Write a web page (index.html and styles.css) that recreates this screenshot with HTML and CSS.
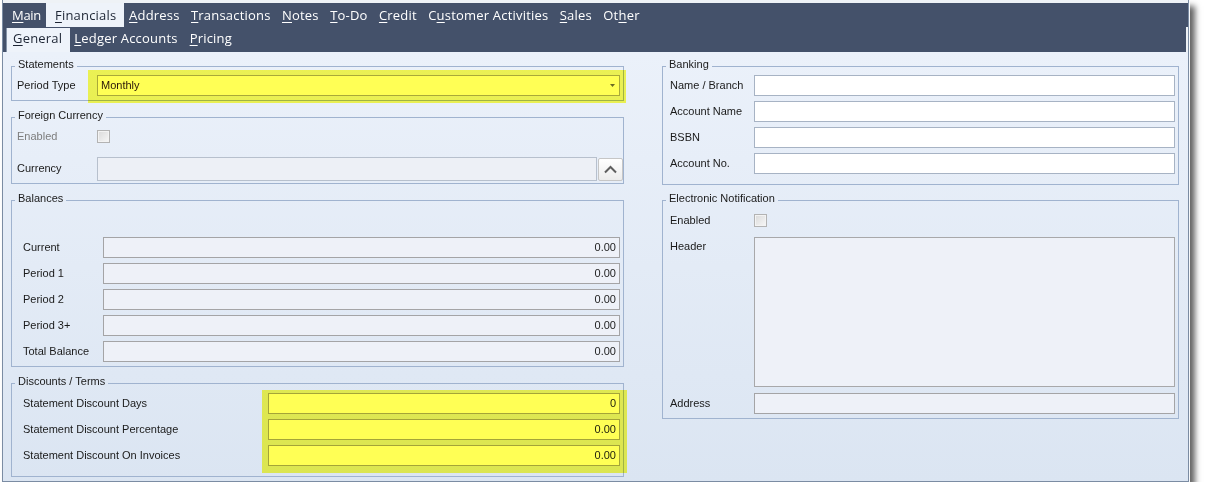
FILE: index.html
```html
<!DOCTYPE html>
<html>
<head>
<meta charset="utf-8">
<title>Financials</title>
<link rel="stylesheet" href="styles.css">
</head>
<body>
<div class="window">
  <div class="tabbar">
    <div class="tabrow top">
      <span class="tab first"><u>M</u>ain</span>
      <span class="tab sel"><u>F</u>inancials</span>
      <span class="tab"><u>A</u>ddress</span>
      <span class="tab"><u>T</u>ransactions</span>
      <span class="tab"><u>N</u>otes</span>
      <span class="tab"><u>T</u>o-Do</span>
      <span class="tab"><u>C</u>redit</span>
      <span class="tab">C<u>u</u>stomer Activities</span>
      <span class="tab"><u>S</u>ales</span>
      <span class="tab">Ot<u>h</u>er</span>
    </div>
    <div class="tabrow sub">
      <span class="tab sel"><u>G</u>eneral</span>
      <span class="tab"><u>L</u>edger Accounts</span>
      <span class="tab"><u>P</u>ricing</span>
    </div>
  </div>

  <div class="content">
    <div class="col left">
      <fieldset class="g">
        <legend>Statements</legend>
        <div class="gb gb-stmt">
          <div class="row">
            <span class="lbl w80">Period Type</span>
            <div class="select w523"><span>Monthly</span><svg class="caret" width="5" height="3" viewBox="0 0 5 3"><polygon points="0,0 5,0 2.5,3" fill="#6a6a6a"/></svg></div>
          </div>
        </div>
      </fieldset>

      <fieldset class="g mt8">
        <legend>Foreign Currency</legend>
        <div class="gb gb-fc">
          <div class="row r13">
            <span class="lbl w80 dis">Enabled</span>
            <span class="chk"></span>
          </div>
          <div class="row r24 top">
            <span class="lbl w80 mid24">Currency</span>
            <div class="curbox"></div>
            <div class="btn"><svg width="25" height="23" viewBox="0 0 25 23"><polyline points="7,14.5 12.5,9 18,14.5" fill="none" stroke="#5e5e5e" stroke-width="2"/></svg></div>
          </div>
        </div>
      </fieldset>

      <fieldset class="g mt8">
        <legend>Balances</legend>
        <div class="gb gb-bal rows">
          <div class="row"><span class="lbl w80">Current</span><div class="inp ro w517">0.00</div></div>
          <div class="row"><span class="lbl w80">Period 1</span><div class="inp ro w517">0.00</div></div>
          <div class="row"><span class="lbl w80">Period 2</span><div class="inp ro w517">0.00</div></div>
          <div class="row"><span class="lbl w80">Period 3+</span><div class="inp ro w517">0.00</div></div>
          <div class="row"><span class="lbl w80">Total Balance</span><div class="inp ro w517">0.00</div></div>
        </div>
      </fieldset>

      <fieldset class="g mt8">
        <legend>Discounts / Terms</legend>
        <div class="gb gb-disc rows">
          <div class="row"><span class="lbl w245">Statement Discount Days</span><div class="inp ed w352">0</div></div>
          <div class="row"><span class="lbl w245">Statement Discount Percentage</span><div class="inp ed w352">0.00</div></div>
          <div class="row"><span class="lbl w245">Statement Discount On Invoices</span><div class="inp ed w352">0.00</div></div>
        </div>
      </fieldset>
    </div>

    <div class="col right">
      <fieldset class="g">
        <legend>Banking</legend>
        <div class="gb gb-bank rows">
          <div class="row"><span class="lbl w84">Name / Branch</span><div class="inp ed w421 bl"></div></div>
          <div class="row"><span class="lbl w84">Account Name</span><div class="inp ed w421 bl"></div></div>
          <div class="row"><span class="lbl w84">BSBN</span><div class="inp ed w421 bl"></div></div>
          <div class="row"><span class="lbl w84">Account No.</span><div class="inp ed w421 bl"></div></div>
        </div>
      </fieldset>

      <fieldset class="g mt7">
        <legend>Electronic Notification</legend>
        <div class="gb gb-en">
          <div class="row r13">
            <span class="lbl w84">Enabled</span>
            <span class="chk"></span>
          </div>
          <div class="row top hdr">
            <span class="lbl w84 toplbl">Header</span>
            <div class="textarea w421"></div>
          </div>
          <div class="row addr">
            <span class="lbl w84">Address</span>
            <div class="inp ro w421"></div>
          </div>
        </div>
      </fieldset>
    </div>
  </div>

  <div class="hl hl-period"></div>
  <div class="hl hl-disc"></div>
</div>
</body>
</html>
```

FILE: styles.css
```css
* { box-sizing: border-box; }

html, body {
  margin: 0;
  background: #ffffff;
}

body {
  font-family: "Liberation Sans", Arial, sans-serif;
  font-size: 11px;
  color: #1a1a1a;
}

.window {
  position: relative;
  margin-left: 2px;
  width: 1187px;
  height: 482px;
  padding-top: 3px;
  background: #eef2f6;
  border-left: 1px solid #7b8ca3;
  border-right: 1px solid #7b8ca3;
  border-bottom: 1px solid #7b8ca3;
  box-shadow: 1px 1px 0 0 #f6f8fa, 6px 6px 6px rgba(0, 0, 0, 0.62);
  display: flex;
  flex-direction: column;
}

/* ---------- tab bar ---------- */
.tabbar {
  font-family: "Open Sans", "Noto Sans", sans-serif;
  font-size: 13px;
  letter-spacing: 0.2px;
  color: #ffffff;
}

.tabrow {
  display: flex;
  padding-left: 3px;
  background: #44516a;
}

.tabrow.top {
  height: 24px;
  line-height: 24px;
}

.tabrow.sub {
  height: 25px;
  line-height: 22px;
  margin-right: 2px;
}

.tab {
  padding: 0 6px;
  white-space: nowrap;
}

.tabrow.top .tab { padding: 0 5.7px; }

.tabrow.top .tab.first {
  letter-spacing: -0.3px;
  padding: 0 6px;
}

.tab u {
  text-decoration: underline;
  text-decoration-thickness: 1px;
  text-underline-offset: 2px;
}

.tabrow.top .tab.sel {
  background: #eef3fa;
  color: #1d2534;
  padding: 0 8px 0 9px;
  margin: 0 -1px;
}

.tabrow.sub .tab.sel {
  background: #eef3fa;
  color: #1d2534;
  margin-top: 1px;
  height: 24px;
  line-height: 21px;
  padding: 0 8px 0 6px;
  margin-right: -2px;
  border-left: 1px solid #8694a8;
}

/* ---------- content ---------- */
.content {
  flex: 1;
  display: flex;
  gap: 38px;
  padding: 6px 0 0 8px;
  background: linear-gradient(#ebf1fa, #dbe5f2);
}

.col {
  display: flex;
  flex-direction: column;
}

.col.left { width: 613px; }
.col.right { width: 517px; }

fieldset.g {
  margin: 0;
  padding: 0;
  min-width: 0;
  border: 1px solid #a0b3cf;
}

fieldset.g.mt8 { margin-top: 8px; }
fieldset.g.mt7 { margin-top: 7px; }

fieldset.g legend {
  font-size: 11px;
  line-height: 12px;
  padding: 0 3px 5px;
  margin-left: 3px;
  color: #1a1a1a;
}

.gb-stmt { padding: 0 3px 4px 5px; }
.gb-fc   { padding: 4px 0 2px 5px; }
.gb-bal  { padding: 28px 3px 4px 11px; }
.gb-disc { padding: 1px 3px 10px 11px; }
.gb-bank { padding: 0 3px 10px 7px; }
.gb-en   { padding: 5px 3px 4px 7px; }

.rows {
  display: flex;
  flex-direction: column;
  gap: 5px;
}

.row {
  display: flex;
  align-items: center;
  height: 21px;
}

.row.r13 { height: 13px; }
.row.r24 { height: 24px; margin-top: 14px; }
.row.top { align-items: flex-start; }
.row.hdr { height: 150px; margin-top: 10px; }
.row.addr { margin-top: 6px; }

.lbl {
  line-height: 13px;
  white-space: nowrap;
  flex: none;
}

.lbl.dis { color: #7d7d7d; }
.lbl.mid24 { margin-top: 5px; }
.lbl.toplbl { margin-top: 3px; }

.w80 { width: 80px; }
.w84 { width: 84px; }
.w245 { width: 245px; }
.w352 { width: 352px; }
.w421 { width: 421px; }
.w517 { width: 517px; }
.w523 { width: 523px; }

.select {
  height: 21px;
  border: 1px solid #a9a9a9;
  background: #ffffff;
  display: flex;
  align-items: center;
  justify-content: space-between;
  padding: 0 4px 0 3px;
  line-height: 13px;
  color: #2a1616;
}

.caret { display: block; }

.inp {
  height: 21px;
  border: 1px solid #a4a4a6;
  display: flex;
  align-items: center;
  justify-content: flex-end;
  padding-right: 3px;
  line-height: 13px;
  color: #1c1c1c;
}

.inp.ro { background: #eef1f8; }
.inp.ed { background: #ffffff; }
.inp.bl { border-color: #a7b3c4; }

.textarea {
  height: 150px;
  border: 1px solid #a8a8aa;
  background: #eef1f8;
}

.chk {
  width: 13px;
  height: 13px;
  border: 1px solid #b3b3b3;
  background: linear-gradient(135deg, #dadada, #f7f7f7);
  box-shadow: inset 0 0 0 1px #f3f3f3;
}

.curbox {
  width: 500px;
  height: 24px;
  border: 1px solid #b7c0cd;
  background: #edf0f6;
}

.btn {
  width: 25px;
  height: 23px;
  margin-left: 1px;
  margin-top: 1px;
  border: 1px solid #c6c6c6;
  border-radius: 2px;
  background: linear-gradient(#ffffff, #ececec);
  overflow: hidden;
}

.btn svg {
  display: block;
  margin: -1px 0 0 -1px;
}

/* screenshot annotation highlights */
.hl {
  position: absolute;
  background: #ffff55;
  mix-blend-mode: multiply;
  pointer-events: none;
}

.hl-period {
  left: 85px;
  top: 70px;
  width: 538px;
  height: 33px;
}

.hl-disc {
  left: 259px;
  top: 390px;
  width: 365px;
  height: 83px;
}
```
